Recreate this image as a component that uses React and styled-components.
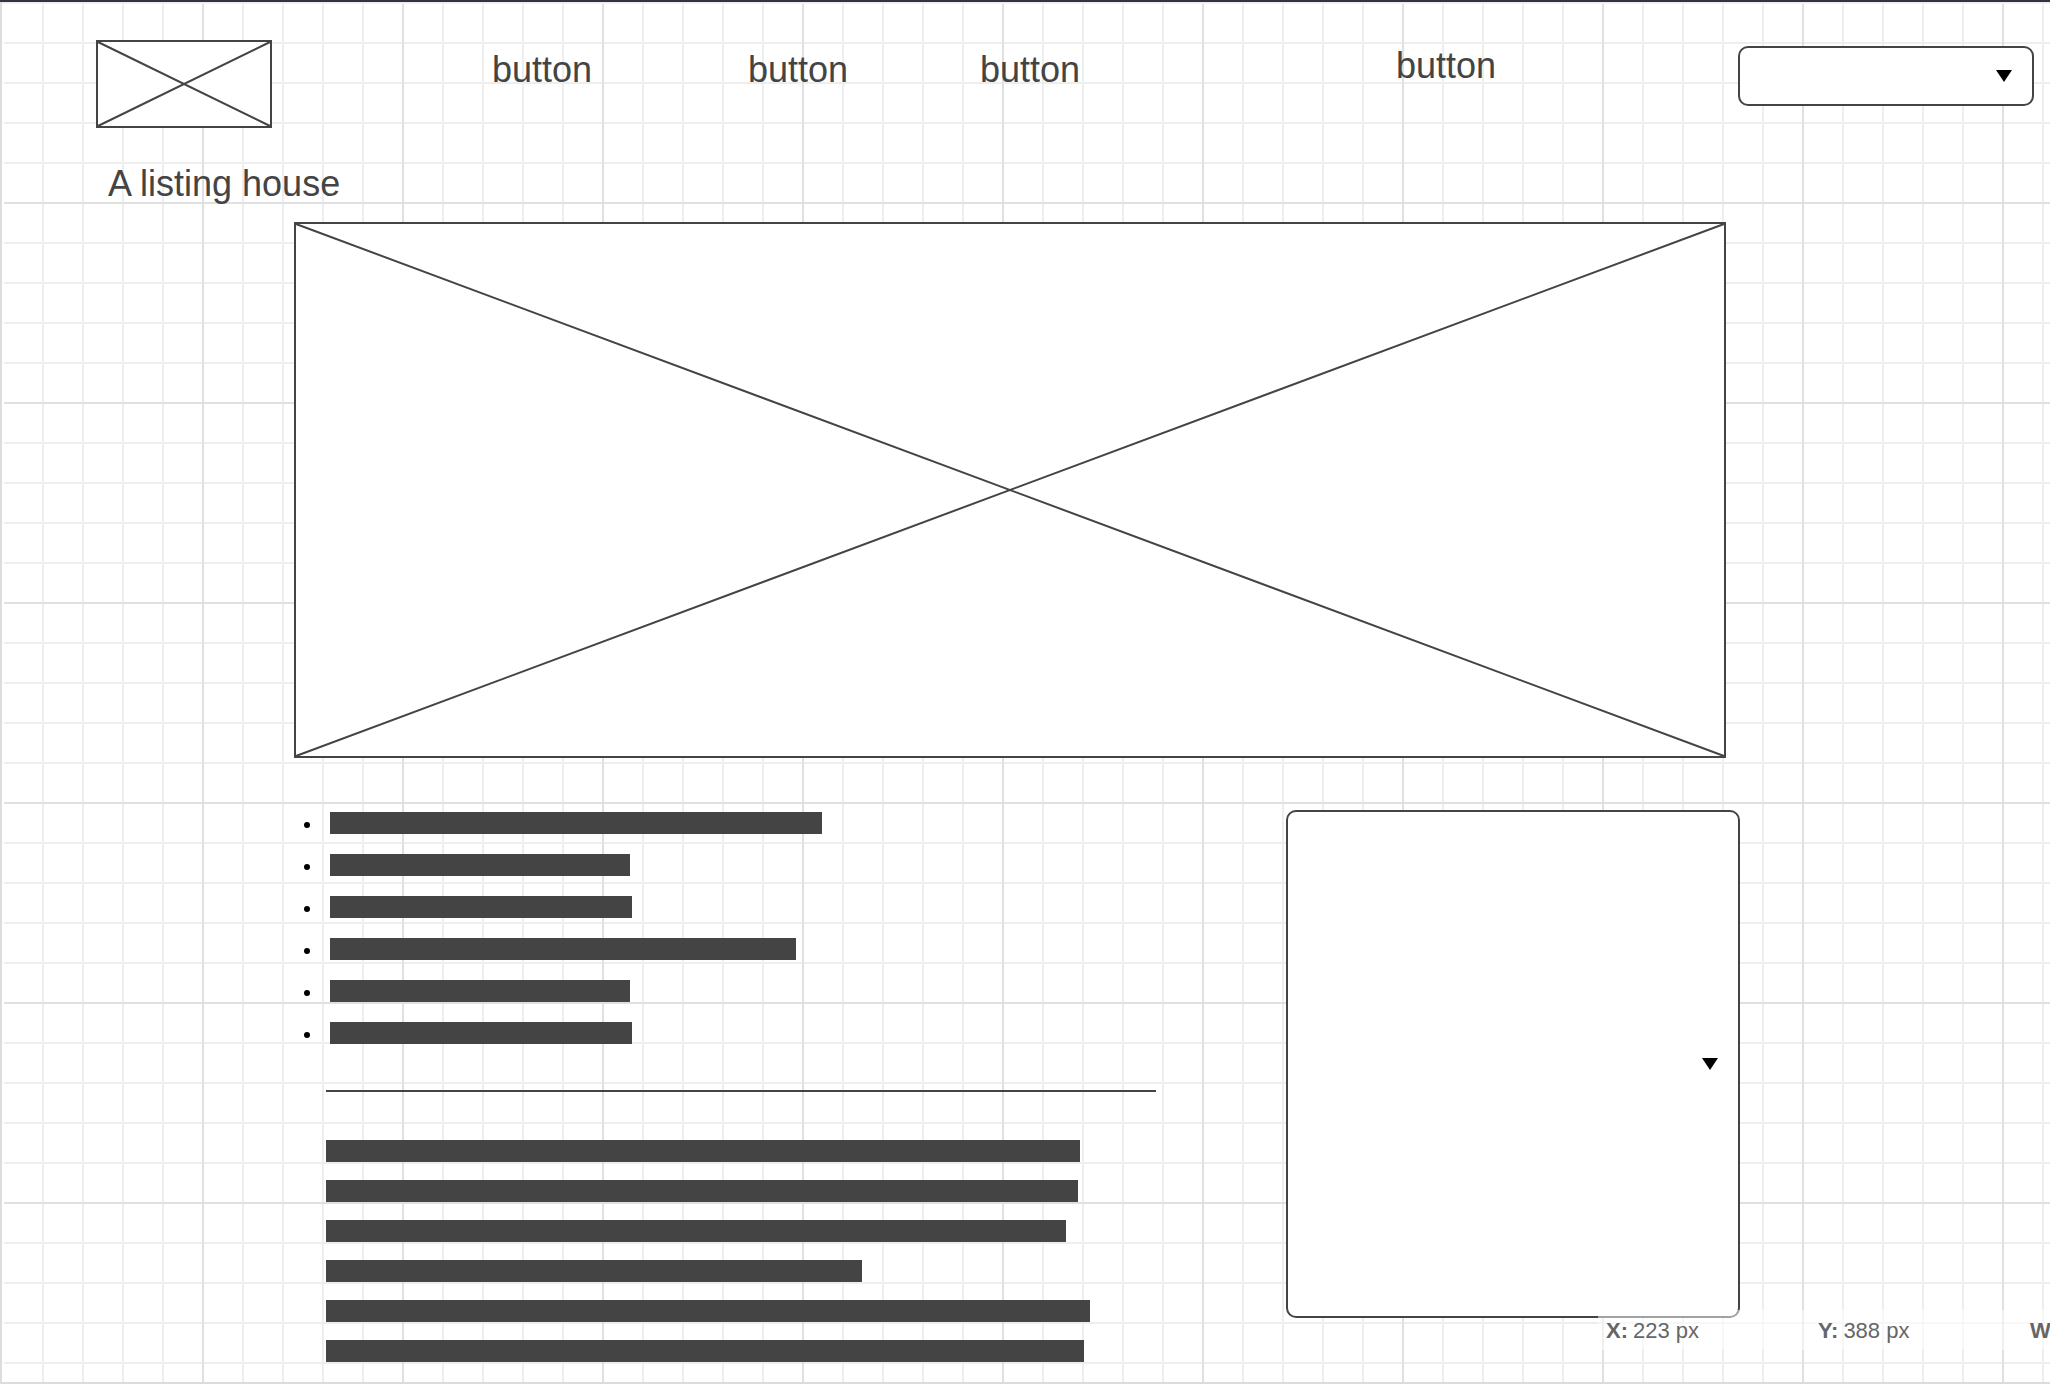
import React from "react";
import styled, { createGlobalStyle } from "styled-components";

const GlobalStyle = createGlobalStyle`
  *, *::before, *::after { box-sizing: border-box; }
  body {
    margin: 0;
    background: #fff;
    color: #444;
    font-family: "Liberation Sans", Arial, sans-serif;
  }
`;

const TopEdge = styled.div`
  height: 2px;
  background: #333344;
`;

/* Sheet of graph paper: 40px cells, with a darker line every 200px */
const Canvas = styled.div`
  position: relative;
  overflow: hidden;
  padding-bottom: 20px;
  border-left: 2px solid #ddd;
  border-bottom: 2px solid #dcdbe1;
  background:
    linear-gradient(#e4e4e4, #fafafa) 0 0 / 100% 2px no-repeat,
    linear-gradient(#fff, #fff) 0 0 / 2px 100% no-repeat,
    linear-gradient(90deg, #e0e0e0 2px, transparent 2px) 0 0 / 200px 200px,
    linear-gradient(#e0e0e0 2px, transparent 2px) 0 0 / 200px 200px,
    linear-gradient(90deg, #eee 2px, transparent 2px) 0 0 / 40px 40px,
    linear-gradient(#eee 2px, transparent 2px) 0 0 / 40px 40px,
    #fff;
`;

const Header = styled.header`
  display: grid;
  grid-template-columns: 396fr 1246fr 296fr;
  align-items: start;
  padding: 38px 16px 0 94px;
`;

const Nav = styled.nav`
  display: grid;
  grid-template-columns: 256fr 232fr 416fr 342fr;
  align-items: start;
  justify-items: start;
`;

const NavButton = styled.button`
  margin: ${(p) => (p.$raised ? 5 : 9)}px 0 0;
  padding: 0;
  border: 0;
  background: none;
  color: inherit;
  font: inherit;
  font-size: 36px;
  line-height: 42px;
  cursor: pointer;
`;

const Frame = styled.div`
  width: ${(p) => p.$width};
  height: ${(p) => p.$height}px;
  border: 2px solid #444;
  background: #fff;

  svg {
    display: block;
    width: 100%;
    height: 100%;
    overflow: visible;
  }
`;

const Title = styled.h1`
  margin: 35px 0 17px 106px;
  font-size: 36px;
  font-weight: 400;
  line-height: 42px;
`;

const Hero = styled.section`
  padding: 0 324px 0 292px;
`;

const Details = styled.div`
  display: grid;
  grid-template-columns: minmax(0, 1fr) 454px;
  align-items: start;
  padding: 52px 310px 0 292px;
`;

const Column = styled.div`
  padding: 2px 130px 0 10px;
`;

const BulletList = styled.ul`
  display: grid;
  gap: 20px;
  margin: 0;
  padding: 0;
  list-style: none;
`;

const BulletItem = styled.li`
  display: flex;
  align-items: center;
  gap: 20px;

  &::before {
    content: "";
    flex: none;
    width: 6px;
    height: 6px;
    margin-top: 4px;
    border-radius: 50%;
    background: #000;
  }
`;

const Bar = styled.div`
  height: 22px;
  max-width: 100%;
  background: #444;
`;

const Rule = styled.hr`
  height: 2px;
  margin: 46px 0 48px 22px;
  border: 0;
  background: #444;
`;

const Paragraph = styled.div`
  display: grid;
  gap: 18px;
  margin-left: 22px;
`;

const SelectWrap = styled.div`
  position: relative;
  height: ${(p) => p.$height}px;
  margin-top: ${(p) => p.$top || 0}px;
`;

const Select = styled.select`
  display: block;
  width: 100%;
  height: 100%;
  margin: 0;
  padding: 0 48px 0 16px;
  appearance: none;
  border: 2px solid #444;
  border-radius: 10px;
  background: #fff;
  color: inherit;
  font: inherit;
  font-size: 22px;
`;

const Arrow = styled.svg`
  position: absolute;
  top: calc(50% - 6px);
  right: 22px;
  width: 16px;
  height: 12px;
  pointer-events: none;
`;

/* Translucent read-out floating over the sheet */
const Readout = styled.dl`
  position: absolute;
  right: 0;
  bottom: 32px;
  display: flex;
  width: 452px;
  height: 40px;
  margin: 0;
  padding-left: 8px;
  overflow: hidden;
  background: rgba(255, 255, 255, 0.5);
  color: #666;
  font-size: 22px;
  line-height: 42px;
  white-space: nowrap;
`;

const Measure = styled.div`
  display: flex;
  flex: 0 0 212px;
  gap: 5px;

  dt { font-weight: 700; }
  dd { margin: 0; }
`;

const listBars = [492, 300, 302, 466, 300, 302];
const textBars = [754, 752, 740, 536, 764, 758];

function Placeholder({ width, height, label }) {
  return (
    <Frame $width={width} $height={height} role="img" aria-label={label}>
      <svg viewBox="0 0 100 100" preserveAspectRatio="none">
        <path
          d="M0 0L100 100M100 0L0 100"
          fill="none"
          stroke="#444"
          strokeWidth="2"
          vectorEffect="non-scaling-stroke"
        />
      </svg>
    </Frame>
  );
}

function Dropdown({ height, top, label }) {
  return (
    <SelectWrap $height={height} $top={top}>
      <Select aria-label={label} defaultValue="">
        <option value="" />
      </Select>
      <Arrow viewBox="0 0 16 12" aria-hidden="true">
        <path d="M0 0H16L8 12Z" fill="#000" />
      </Arrow>
    </SelectWrap>
  );
}

export default function App() {
  return (
    <>
      <GlobalStyle />
      <TopEdge />
      <Canvas>
        <Header>
          <Placeholder width="176px" height={88} label="Logo" />
          <Nav>
            <NavButton type="button">button</NavButton>
            <NavButton type="button">button</NavButton>
            <NavButton type="button">button</NavButton>
            <NavButton type="button" $raised>button</NavButton>
          </Nav>
          <Dropdown height={60} top={6} label="Menu" />
        </Header>

        <main>
          <Title>A listing house</Title>
          <Hero>
            <Placeholder width="100%" height={536} label="House photo" />
          </Hero>
          <Details>
            <Column>
              <BulletList>
                {listBars.map((width, i) => (
                  <BulletItem key={i}>
                    <Bar style={{ width }} />
                  </BulletItem>
                ))}
              </BulletList>
              <Rule />
              <Paragraph>
                {textBars.map((width, i) => (
                  <Bar key={i} style={{ width }} />
                ))}
              </Paragraph>
            </Column>
            <Dropdown height={508} label="Booking" />
          </Details>
        </main>

        <Readout>
          <Measure>
            <dt>X:</dt>
            <dd>223 px</dd>
          </Measure>
          <Measure>
            <dt>Y:</dt>
            <dd>388 px</dd>
          </Measure>
          <Measure>
            <dt>W</dt>
          </Measure>
        </Readout>
      </Canvas>
    </>
  );
}
